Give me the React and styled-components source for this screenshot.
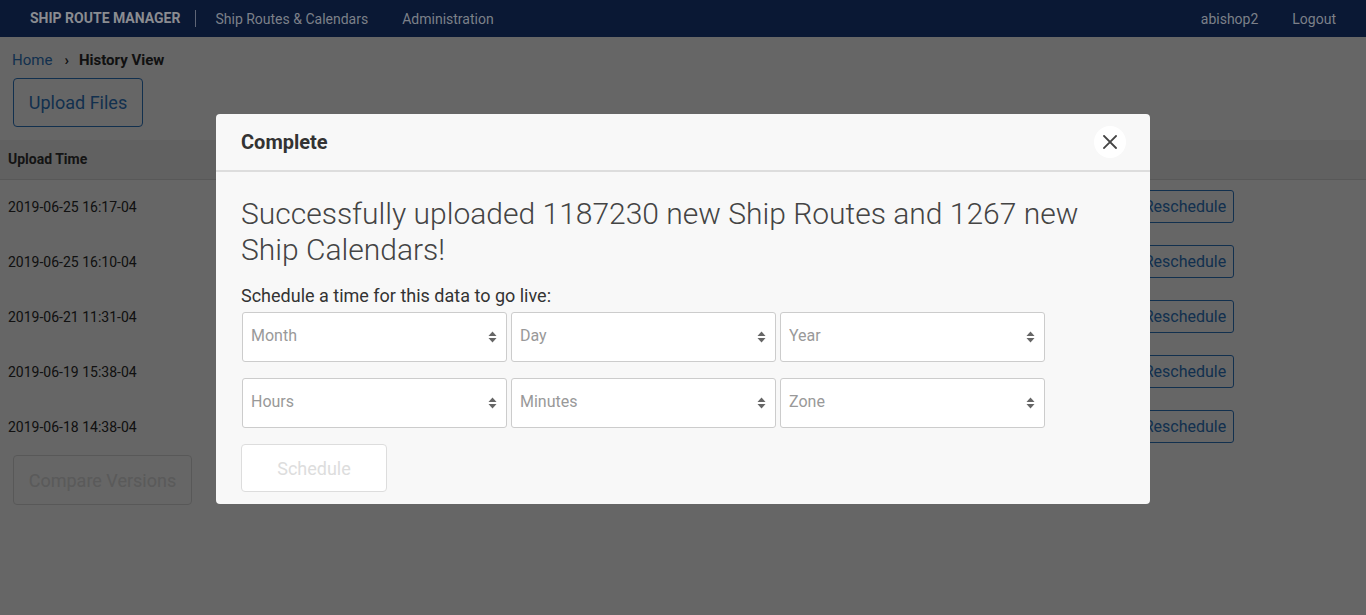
import React, { useState } from 'react'
import styled, { createGlobalStyle } from 'styled-components'

const GlobalStyle = createGlobalStyle`
  html, body {
    margin: 0;
    padding: 0;
    background: #ffffff;
    font-family: Roboto, "Liberation Sans", sans-serif;
    color: #2b2b2b;
  }
  * { box-sizing: border-box; }
`

const uploads = [
  '2019-06-25 16:17-04',
  '2019-06-25 16:10-04',
  '2019-06-21 11:31-04',
  '2019-06-19 15:38-04',
  '2019-06-18 14:38-04',
]

const Navbar = () => (
  <Nav>
    <Brand>Ship Route Manager</Brand>
    <NavLink>Ship Routes &amp; Calendars</NavLink>
    <NavLink>Administration</NavLink>
    <NavRight>
      <NavLink>abishop2</NavLink>
      <NavLink>Logout</NavLink>
    </NavRight>
  </Nav>
)

const Arrows = () => (
  <svg width="9" height="12" viewBox="0 0 9 12">
    <path d="M4.5 0.5 L8.5 5 L0.5 5 Z" fill="#666" />
    <path d="M0.5 7 L8.5 7 L4.5 11.5 Z" fill="#666" />
  </svg>
)

const Picker = ({ label }) => (
  <SelectBox>
    <select defaultValue="">
      <option value="" disabled>{label}</option>
    </select>
    <ArrowSlot><Arrows /></ArrowSlot>
  </SelectBox>
)

const App = () => {
  const [abierto, cambiarAbierto] = useState(true)

  return (
    <>
      <GlobalStyle />
      <Navbar />
      <Page>
        <Breadcrumb>
          <Crumb>Home</Crumb>
          <Sep>›</Sep>
          <Current>History View</Current>
        </Breadcrumb>
        <UploadButton>Upload Files</UploadButton>
        <Table>
          <thead>
            <tr>
              <Th>Upload Time</Th>
              <Th />
            </tr>
          </thead>
          <tbody>
            {uploads.map((u) => (
              <tr key={u}>
                <Td>{u}</Td>
                <TdRight><Reschedule>Reschedule</Reschedule></TdRight>
              </tr>
            ))}
          </tbody>
        </Table>
        <CompareButton disabled>Compare Versions</CompareButton>
      </Page>

      {abierto && (
        <>
          <Backdrop />
          <Modal>
            <ModalHeader>
              <ModalTitle>Complete</ModalTitle>
              <CloseButton onClick={() => cambiarAbierto(false)} aria-label="close">
                <svg width="14" height="14" viewBox="0 0 14 14">
                  <path d="M1 1 L13 13 M13 1 L1 13" stroke="#444" strokeWidth="1.8" strokeLinecap="square" />
                </svg>
              </CloseButton>
            </ModalHeader>
            <ModalBody>
              <Headline>Successfully uploaded 1187230 new Ship Routes and 1267 new Ship Calendars!</Headline>
              <Prompt>Schedule a time for this data to go live:</Prompt>
              <PickerGrid>
                <Picker label="Month" />
                <Picker label="Day" />
                <Picker label="Year" />
                <Picker label="Hours" />
                <Picker label="Minutes" />
                <Picker label="Zone" />
              </PickerGrid>
              <ScheduleButton disabled>Schedule</ScheduleButton>
            </ModalBody>
          </Modal>
        </>
      )}
    </>
  )
}

export default App

const Nav = styled.nav`
  position: relative;
  z-index: 20;
  height: 37px;
  background: #0a1834;
  display: flex;
  align-items: center;
  padding: 0 30px;
  font-size: 14px;
`

const Brand = styled.span`
  font-weight: 700;
  font-size: 14px;
  text-transform: uppercase;
  color: #8a8c91;
  padding-right: 15px;
  margin-right: 19px;
  border-right: 1px solid #5f6576;
  line-height: 17px;
`

const NavLink = styled.a`
  color: #7c8089;
  margin-right: 34px;
  cursor: pointer;
  &:last-child { margin-right: 0; }
`

const NavRight = styled.div`
  margin-left: auto;
  display: flex;
`

const Page = styled.div`
  padding: 0;
`

const Breadcrumb = styled.div`
  display: flex;
  align-items: center;
  padding: 4px 12px 0;
  font-size: 15px;
  height: 41px;
`

const Crumb = styled.a`
  color: #2f78c4;
`

const Sep = styled.span`
  margin: 0 10px 0 12px;
  font-weight: 700;
  color: #2b2b2b;
`

const Current = styled.span`
  font-weight: 700;
  color: #2b2b2b;
`

const UploadButton = styled.button`
  margin: 0 0 0 13px;
  width: 130px;
  height: 49px;
  background: transparent;
  border: 1px solid #2f78c4;
  border-radius: 4px;
  color: #2f78c4;
  font-family: inherit;
  font-size: 18px;
  display: block;
`

const Table = styled.table`
  width: 100%;
  margin-top: 13px;
  border-collapse: collapse;
  font-size: 14px;
`

const Th = styled.th`
  text-align: left;
  font-weight: 700;
  background: #f3f3f3;
  height: 39px;
  padding: 0 8px;
  border-bottom: 1px solid #dddddd;
  color: #333;
`

const Td = styled.td`
  height: 55px;
  padding: 0 8px;
`

const TdRight = styled.td`
  text-align: right;
  padding-right: 132px;
`

const Reschedule = styled.button`
  height: 33px;
  width: 98px;
  background: transparent;
  border: 1px solid #2f78c4;
  border-radius: 3px;
  color: #2f78c4;
  font-family: inherit;
  font-size: 16px;
`

const CompareButton = styled.button`
  margin: 1px 0 0 13px;
  width: 179px;
  height: 50px;
  background: transparent;
  border: 1px solid #dddddd;
  border-radius: 4px;
  color: #e0e0e0;
  font-family: inherit;
  font-size: 18px;
  display: block;
`

const Backdrop = styled.div`
  position: fixed;
  inset: 0;
  z-index: 10;
  background: rgba(0, 0, 0, 0.6);
`

const Modal = styled.div`
  position: fixed;
  z-index: 30;
  top: 114px;
  left: 50%;
  transform: translateX(-50%);
  width: 934px;
  background: #f8f8f8;
  border-radius: 4px;
`

const ModalHeader = styled.div`
  height: 58px;
  display: flex;
  align-items: center;
  justify-content: space-between;
  padding: 0 24px 0 25px;
  border-bottom: 2px solid #dddddd;
`

const ModalTitle = styled.h2`
  margin: 0;
  font-size: 20px;
  font-weight: 700;
  color: #333;
`

const CloseButton = styled.button`
  width: 32px;
  height: 32px;
  border-radius: 50%;
  border: none;
  background: #ffffff;
  display: flex;
  align-items: center;
  justify-content: center;
  padding: 0;
  cursor: pointer;
`

const ModalBody = styled.div`
  padding: 24px 24px 12px 25px;
`

const Headline = styled.h1`
  margin: 0;
  font-size: 30px;
  line-height: 36px;
  font-weight: 300;
  color: #444;
`

const Prompt = styled.p`
  margin: 18px 0 6px;
  font-size: 18px;
  line-height: 20px;
  color: #333;
`

const PickerGrid = styled.div`
  display: grid;
  grid-template-columns: repeat(3, 265px);
  column-gap: 4px;
  row-gap: 16px;
  padding-left: 1px;
`

const SelectBox = styled.div`
  position: relative;
  height: 50px;

  select {
    appearance: none;
    width: 100%;
    height: 100%;
    border: 1px solid #cccccc;
    border-radius: 3px;
    background: #ffffff;
    padding: 0 30px 4px 8px;
    font-family: inherit;
    font-size: 16px;
    color: #999999;
  }
`

const ArrowSlot = styled.span`
  position: absolute;
  right: 10px;
  top: 19px;
  pointer-events: none;
  display: flex;
`

const ScheduleButton = styled.button`
  margin-top: 16px;
  width: 146px;
  height: 48px;
  background: #ffffff;
  border: 1px solid #dddddd;
  border-radius: 4px;
  color: #dddddd;
  font-family: inherit;
  font-size: 18px;
`
